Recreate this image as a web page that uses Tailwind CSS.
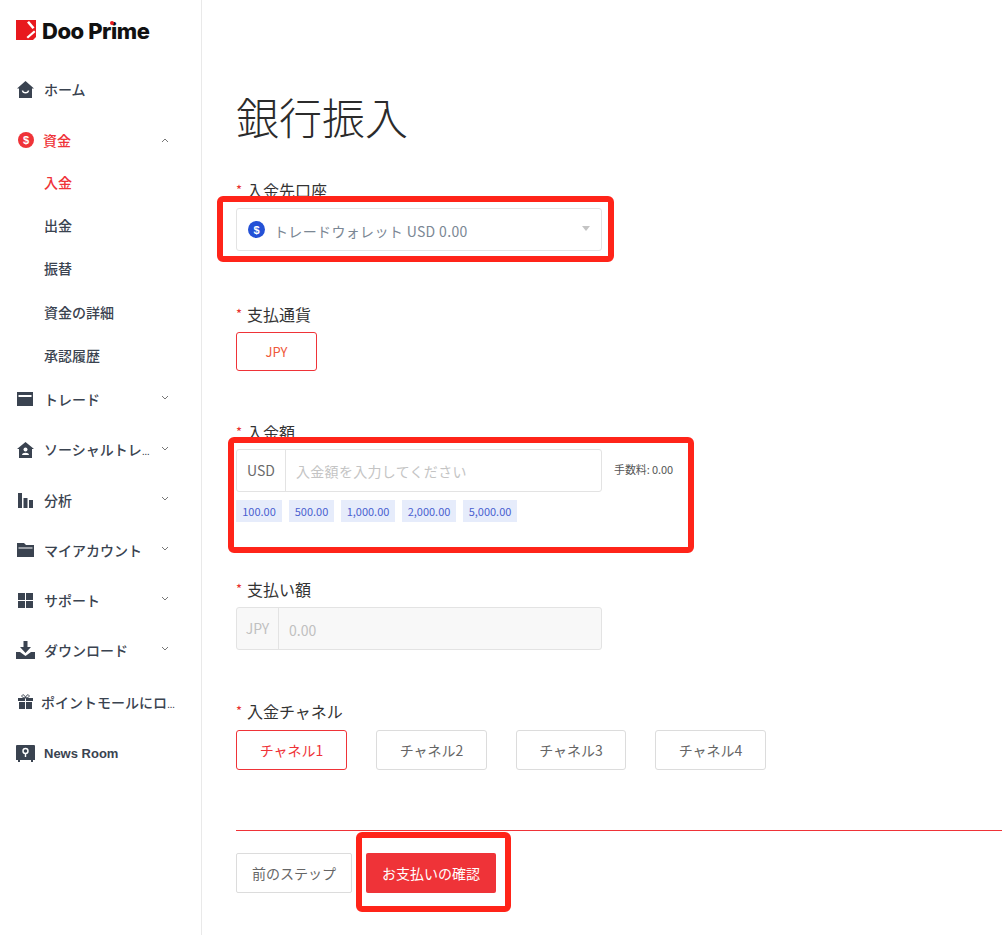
<!doctype html>
<html lang="ja">
<head>
<meta charset="utf-8">
<script src="https://cdn.jsdelivr.net/npm/@tailwindcss/browser@4"></script>
</head>
<body class="bg-white font-['Noto_Sans_CJK_JP','Noto_Sans',sans-serif] text-[#333]">
<div class="relative flex w-[1002px] h-[935px] overflow-hidden">
  <aside class="w-[202px] h-full shrink-0 border-r border-[#e9e9e9] text-[14px] font-medium text-[#3a4350]">
    <div class="relative h-[65px] flex items-start pt-[20px] pl-[16px]">
      <svg class="w-[20px] h-[20px]" viewBox="0 0 20 20"><path fill="#e8191e" d="M0 0H20V17L17 20H0Z"/><path fill="#fff" d="M11 2.500L13 1L18.500 7.500L16.500 9Z"/><path fill="#fff" d="M10.500 17L18 10.500L19.500 12L12 18.500Z"/></svg>
      <span class="ml-[6px] -mt-[1px] font-['Inter'] text-[22px] leading-[24px] font-extrabold tracking-[-0.45px] text-[#111]">Doo Prime</span>
      <span class="absolute left-[110px] top-[21px] w-[4px] h-[4px] rounded-full bg-[#e8191e]"></span>
    </div>
    <div class="h-[51px] flex items-center pl-[17px] pb-[3px]">
      <svg class="w-[17px] h-[17px] shrink-0" viewBox="0 0 17 17"><path fill="#3a4350" d="M8.500 0L17 7.500H15V17H2V7.500H0Z"/><path d="M5.500 9.500C6 12.500 11 12.500 11.500 9.500" stroke="#fff" stroke-width="1.500" fill="none"/></svg>
      <span class="ml-[10px]">ホーム</span>
    </div>
    <div class="h-[50px] flex items-center pl-[18px] pb-[2px] text-[#ef3338]">
      <svg class="w-[16px] h-[16px] shrink-0" viewBox="0 0 16 16"><circle cx="8" cy="8" r="8" fill="#ef3338"/><text x="8" y="12" text-anchor="middle" font-size="11" font-weight="700" fill="#fff" font-family="Liberation Sans">$</text></svg>
      <span class="ml-[9px]">資金</span>
      <svg class="ml-auto mr-[32px] w-[8px] h-[5px]" viewBox="0 0 8 5"><path d="M1 4L4 1L7 4" stroke="#777" fill="none"/></svg>
    </div>
    <div class="pl-[44px]">
      <div class="h-[33px] flex items-center text-[#ef3338] -mt-[1px] pt-[2px]">入金</div>
      <div class="h-[43.5px] flex items-center pt-[11px]">出金</div>
      <div class="h-[43.5px] flex items-center pt-[11px]">振替</div>
      <div class="h-[43.5px] flex items-center pt-[11px]">資金の詳細</div>
      <div class="h-[43.5px] flex items-center pt-[11px]">承認履歴</div>
    </div>
    <div class="h-[50px] mt-[2px] flex items-center pl-[17px]">
      <svg class="w-[16px] h-[14px] shrink-0" viewBox="0 0 16 14"><path fill="#3a4350" d="M0 0H16V14H0Z"/><path fill="#fff" d="M1.500 3H14.500V5H1.500Z"/></svg>
      <span class="ml-[11px]">トレード</span>
      <svg class="ml-auto mr-[32px] -mt-[3px] w-[8px] h-[5px]" viewBox="0 0 8 5"><path d="M1 1L4 4L7 1" stroke="#777" fill="none"/></svg>
    </div>
    <div class="h-[51px] flex items-center pl-[17px]">
      <svg class="w-[17px] h-[16px] shrink-0" viewBox="0 0 17 16"><path fill="#3a4350" d="M8.500 0L17 7H15V16H2V7H0Z"/><circle cx="8.500" cy="7.500" r="2" fill="#fff"/><path fill="#fff" d="M5 13C5 10 12 10 12 13Z"/></svg>
      <span class="ml-[10px]">ソーシャルトレ<span class="tracking-[-0.5px] font-['Liberation_Sans'] text-[11px]">...</span></span>
      <svg class="ml-auto mr-[32px] -mt-[3px] w-[8px] h-[5px]" viewBox="0 0 8 5"><path d="M1 1L4 4L7 1" stroke="#777" fill="none"/></svg>
    </div>
    <div class="h-[50px] flex items-center pl-[18px]">
      <svg class="w-[15px] h-[15px] shrink-0" viewBox="0 0 15 15"><path fill="#3a4350" d="M0 0H4V15H0ZM5.500 5H9.500V15H5.500ZM11 7H15V15H11Z"/></svg>
      <span class="ml-[11px]">分析</span>
      <svg class="ml-auto mr-[32px] -mt-[3px] w-[8px] h-[5px]" viewBox="0 0 8 5"><path d="M1 1L4 4L7 1" stroke="#777" fill="none"/></svg>
    </div>
    <div class="h-[50px] flex items-center pl-[17px]">
      <svg class="w-[17px] h-[14px] shrink-0" viewBox="0 0 17 14"><path fill="#3a4350" d="M0 0H7L9 2H17V14H0Z"/><path fill="#fff" d="M1.500 4.500H15.500V5.500H1.500Z"/></svg>
      <span class="ml-[10px]">マイアカウント</span>
      <svg class="ml-auto mr-[32px] -mt-[3px] w-[8px] h-[5px]" viewBox="0 0 8 5"><path d="M1 1L4 4L7 1" stroke="#777" fill="none"/></svg>
    </div>
    <div class="h-[50px] flex items-center pl-[18px]">
      <svg class="w-[15px] h-[15px] shrink-0" viewBox="0 0 15 15"><path fill="#3a4350" d="M0 0H7V7H0ZM8 0H15V7H8ZM0 8H7V15H0ZM8 8H15V15H8Z"/></svg>
      <span class="ml-[11px]">サポート</span>
      <svg class="ml-auto mr-[32px] -mt-[3px] w-[8px] h-[5px]" viewBox="0 0 8 5"><path d="M1 1L4 4L7 1" stroke="#777" fill="none"/></svg>
    </div>
    <div class="h-[50px] mb-[2px] flex items-center pl-[16px]">
      <svg class="w-[19px] h-[18px] shrink-0" viewBox="0 0 19 18"><path fill="#3a4350" d="M7.500 0H11.500V6H15L9.500 12L4 6H7.500ZM0 11H4L9.500 15L15 11H19V18H0Z"/></svg>
      <span class="ml-[9px]">ダウンロード</span>
      <svg class="ml-auto mr-[32px] -mt-[3px] w-[8px] h-[5px]" viewBox="0 0 8 5"><path d="M1 1L4 4L7 1" stroke="#777" fill="none"/></svg>
    </div>
    <div class="h-[51px] flex items-center pl-[18px]">
      <svg class="w-[15px] h-[15px] shrink-0 -mt-[3px]" viewBox="0 0 15 15"><path fill="#3a4350" d="M0 4H7V7H0ZM8 4H15V7H8ZM1 8H7V15H1ZM8 8H14V15H8Z"/><path d="M7.500 4C5 4 3.500 3 4 1.500C4.700 0 7 1 7.500 4C8 1 10.300 0 11 1.500C11.500 3 10 4 7.500 4Z" stroke="#3a4350" fill="none"/></svg>
      <span class="ml-[8px]">ポイントモールにロ<span class="tracking-[-0.5px] font-['Liberation_Sans'] text-[11px]">...</span></span>
    </div>
    <div class="h-[51px] flex items-center pl-[16px]">
      <svg class="w-[19px] h-[17px] shrink-0" viewBox="0 0 19 17"><path fill="#3a4350" d="M1 0H18A1 1 0 0 1 19 1V15H17V17H15V15H4V17H2V15H0V1A1 1 0 0 1 1 0Z"/><circle cx="9.500" cy="6" r="2.500" fill="none" stroke="#fff" stroke-width="1.400"/><path d="M9.500 8.500V12" stroke="#fff" stroke-width="1.400"/></svg>
      <span class="ml-[9px] font-['Liberation_Sans'] font-bold text-[13px]">News Room</span>
    </div>
  </aside>

  <main class="flex-1 pl-[34px] pt-[86px]">
    <h1 class="text-[43px] leading-[60px] font-light text-[#2b2b2b]">銀行振入</h1>

    <div class="mt-[32px] h-[24px] text-[16px] leading-[24px] text-[#333] flex items-center"><span class="text-[#e8312f] text-[13px] w-[11px]">*</span>入金先口座</div>
    <div class="mt-[6px] w-[366px] h-[43px] border border-[#e3e3e3] rounded-[3px] flex items-center pl-[11px] pr-[11px] text-[14px] text-[#7b8794]">
      <svg class="w-[17px] h-[17px] shrink-0" viewBox="0 0 17 17"><circle cx="8.500" cy="8.500" r="8.500" fill="#2451d6"/><text x="8.500" y="12.500" text-anchor="middle" font-size="11" font-weight="700" fill="#fff" font-family="Liberation Sans">$</text></svg>
      <span class="ml-[9px] pt-[3px] tracking-[0.35px]">トレードウォレット USD 0.00</span>
      <span class="ml-auto -mt-[3px] w-0 h-0 border-x-[4px] border-x-transparent border-t-[5px] border-t-[#c4c4c4]"></span>
    </div>

    <div class="mt-[51px] h-[24px] text-[16px] leading-[24px] flex items-center"><span class="text-[#e8312f] text-[13px] w-[11px]">*</span>支払通貨</div>
    <div class="mt-[6px] w-[81px] h-[39px] border border-[#ef3338] rounded-[3px] flex items-center justify-center text-[13px] text-[#ef5a3c]">JPY</div>

    <div class="mt-[49px] h-[24px] text-[16px] leading-[24px] flex items-center"><span class="text-[#e8312f] text-[13px] w-[11px]">*</span>入金額</div>
    <div class="mt-[5px] flex items-center">
      <div class="w-[366px] h-[43px] border border-[#e3e3e3] rounded-[3px] flex items-center text-[14px]">
        <span class="w-[49px] h-full border-r border-[#e3e3e3] flex items-center justify-center text-[#6b6b6b]">USD</span>
        <span class="ml-[10px] pt-[1px] tracking-[0.3px] text-[#c4c4c4]">入金額を入力してください</span>
      </div>
      <span class="ml-[12px] -mt-[3px] text-[11px] tracking-[-0.1px] text-[#555]">手数料: 0.00</span>
    </div>
    <div class="mt-[8px] flex gap-[7px] text-[11px] text-[#4a5fd0]">
      <span class="h-[22px] w-[46px] bg-[#e6ecfb] flex items-center justify-center">100.00</span>
      <span class="h-[22px] w-[45px] bg-[#e6ecfb] flex items-center justify-center">500.00</span>
      <span class="h-[22px] w-[54px] bg-[#e6ecfb] flex items-center justify-center">1,000.00</span>
      <span class="h-[22px] w-[54px] bg-[#e6ecfb] flex items-center justify-center">2,000.00</span>
      <span class="h-[22px] w-[54px] bg-[#e6ecfb] flex items-center justify-center">5,000.00</span>
    </div>

    <div class="mt-[55px] h-[24px] text-[16px] leading-[24px] flex items-center"><span class="text-[#e8312f] text-[13px] w-[11px]">*</span>支払い額</div>
    <div class="mt-[6px] w-[366px] h-[43px] border border-[#e3e3e3] bg-[#f8f8f8] rounded-[3px] flex items-center text-[14px] text-[#c0c0c0]">
      <span class="w-[42px] h-full border-r border-[#e3e3e3] flex items-center justify-center">JPY</span>
      <span class="ml-[10px] pt-[3px]">0.00</span>
    </div>

    <div class="mt-[49px] h-[24px] text-[16px] leading-[24px] flex items-center"><span class="text-[#e8312f] text-[13px] w-[11px]">*</span>入金チャネル</div>
    <div class="mt-[7px] flex gap-[29px] text-[14px] text-[#666]">
      <span class="w-[111px] h-[40px] border border-[#ef3338] text-[#ef3338] rounded-[3px] flex items-center justify-center">チャネル1</span>
      <span class="w-[111px] h-[40px] border border-[#dcdcdc] rounded-[3px] flex items-center justify-center">チャネル2</span>
      <span class="w-[110px] h-[40px] border border-[#dcdcdc] rounded-[3px] flex items-center justify-center">チャネル3</span>
      <span class="w-[111px] h-[40px] border border-[#dcdcdc] rounded-[3px] flex items-center justify-center">チャネル4</span>
    </div>

    <div class="mt-[60px] h-px bg-[#ef3338]"></div>
    <div class="mt-[22px] flex gap-[14px] text-[14px]">
      <span class="w-[116px] h-[40px] border border-[#dcdcdc] rounded-[2px] flex items-center justify-center text-[#666]">前のステップ</span>
      <span class="w-[130px] h-[40px] bg-[#ef3338] rounded-[2px] flex items-center justify-center text-white">お支払いの確認</span>
    </div>
  </main>

  <div class="absolute left-[217px] top-[196px] w-[397px] h-[66px] border-[6px] border-[#ff2419] rounded-[6px]"></div>
  <div class="absolute left-[228px] top-[437px] w-[466px] h-[116px] border-[6px] border-[#ff2419] rounded-[6px]"></div>
  <div class="absolute left-[356px] top-[832px] w-[155px] h-[80px] border-[6px] border-[#ff2419] rounded-[6px]"></div>
</div>
</body>
</html>
